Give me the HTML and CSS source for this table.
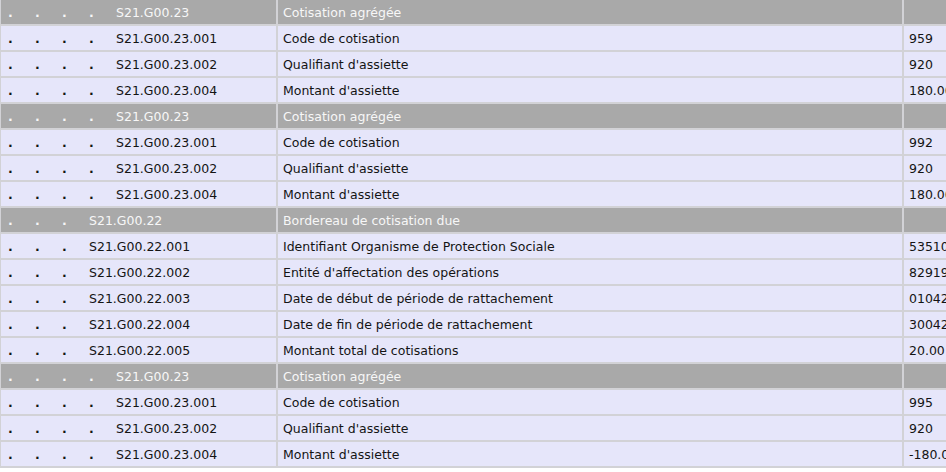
FILE: index.html
```html
<!DOCTYPE html>
<html lang="fr">
<head>
<meta charset="utf-8">
<link rel="stylesheet" href="styles.css">
</head>
<body>
<table class="grid">
  <tr class="group"><td class="code"><span class="ind l4"><i>.</i><i>.</i><i>.</i><i>.</i></span>S21.G00.23</td><td class="label">Cotisation agrégée</td><td class="val"></td></tr>
  <tr><td class="code"><span class="ind l4"><i>.</i><i>.</i><i>.</i><i>.</i></span>S21.G00.23.001</td><td class="label">Code de cotisation</td><td class="val">959</td></tr>
  <tr><td class="code"><span class="ind l4"><i>.</i><i>.</i><i>.</i><i>.</i></span>S21.G00.23.002</td><td class="label">Qualifiant d'assiette</td><td class="val">920</td></tr>
  <tr><td class="code"><span class="ind l4"><i>.</i><i>.</i><i>.</i><i>.</i></span>S21.G00.23.004</td><td class="label">Montant d'assiette</td><td class="val">180.00</td></tr>
  <tr class="group"><td class="code"><span class="ind l4"><i>.</i><i>.</i><i>.</i><i>.</i></span>S21.G00.23</td><td class="label">Cotisation agrégée</td><td class="val"></td></tr>
  <tr><td class="code"><span class="ind l4"><i>.</i><i>.</i><i>.</i><i>.</i></span>S21.G00.23.001</td><td class="label">Code de cotisation</td><td class="val">992</td></tr>
  <tr><td class="code"><span class="ind l4"><i>.</i><i>.</i><i>.</i><i>.</i></span>S21.G00.23.002</td><td class="label">Qualifiant d'assiette</td><td class="val">920</td></tr>
  <tr><td class="code"><span class="ind l4"><i>.</i><i>.</i><i>.</i><i>.</i></span>S21.G00.23.004</td><td class="label">Montant d'assiette</td><td class="val">180.00</td></tr>
  <tr class="group"><td class="code"><span class="ind"><i>.</i><i>.</i><i>.</i></span>S21.G00.22</td><td class="label">Bordereau de cotisation due</td><td class="val"></td></tr>
  <tr><td class="code"><span class="ind"><i>.</i><i>.</i><i>.</i></span>S21.G00.22.001</td><td class="label">Identifiant Organisme de Protection Sociale</td><td class="val">53510</td></tr>
  <tr><td class="code"><span class="ind"><i>.</i><i>.</i><i>.</i></span>S21.G00.22.002</td><td class="label">Entité d'affectation des opérations</td><td class="val">82919</td></tr>
  <tr><td class="code"><span class="ind"><i>.</i><i>.</i><i>.</i></span>S21.G00.22.003</td><td class="label">Date de début de période de rattachement</td><td class="val">01042</td></tr>
  <tr><td class="code"><span class="ind"><i>.</i><i>.</i><i>.</i></span>S21.G00.22.004</td><td class="label">Date de fin de période de rattachement</td><td class="val">30042</td></tr>
  <tr><td class="code"><span class="ind"><i>.</i><i>.</i><i>.</i></span>S21.G00.22.005</td><td class="label">Montant total de cotisations</td><td class="val">20.00</td></tr>
  <tr class="group"><td class="code"><span class="ind l4"><i>.</i><i>.</i><i>.</i><i>.</i></span>S21.G00.23</td><td class="label">Cotisation agrégée</td><td class="val"></td></tr>
  <tr><td class="code"><span class="ind l4"><i>.</i><i>.</i><i>.</i><i>.</i></span>S21.G00.23.001</td><td class="label">Code de cotisation</td><td class="val">995</td></tr>
  <tr><td class="code"><span class="ind l4"><i>.</i><i>.</i><i>.</i><i>.</i></span>S21.G00.23.002</td><td class="label">Qualifiant d'assiette</td><td class="val">920</td></tr>
  <tr><td class="code"><span class="ind l4"><i>.</i><i>.</i><i>.</i><i>.</i></span>S21.G00.23.004</td><td class="label">Montant d'assiette</td><td class="val">-180.0</td></tr>
</table>
</body>
</html>
```
FILE: styles.css
```css
html, body {
  margin: 0;
  padding: 0;
  overflow: hidden;
  background: #ffffff;
}

.grid {
  margin: -2px 0 0 -1px;
  border-collapse: separate;
  border-spacing: 2px;
  background: #d2d2d6;
  font-family: "DejaVu Sans", sans-serif;
  font-size: 12.5px;
  color: #141414;
  table-layout: fixed;
  width: 1000px;
}

.grid td {
  height: 24px;
  padding: 0 0 0 4px;
  box-sizing: border-box;
  background: #e6e6fa;
  white-space: nowrap;
  overflow: hidden;
  vertical-align: middle;
}

.grid td.code {
  width: 275px;
  padding-left: 7px;
}

.grid td.label {
  width: 624px;
  padding-left: 5px;
}

.grid td.val {
  padding-left: 5px;
}

.grid tr.group td {
  background: #a9a9a9;
  color: #f7f7f7;
}

.ind {
  display: inline-flex;
}

.ind i {
  font-style: normal;
  font-weight: bold;
  width: 27px;
}
```
